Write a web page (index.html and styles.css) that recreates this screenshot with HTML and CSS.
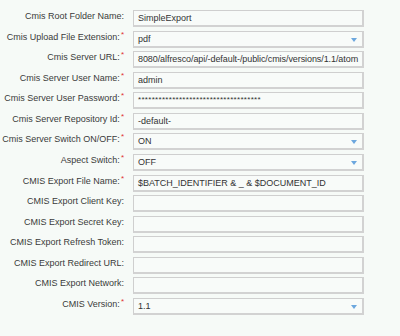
FILE: index.html
```html
<!DOCTYPE html>
<html>
<head>
<meta charset="utf-8">
<link rel="stylesheet" href="styles.css">
</head>
<body>
<div class="form">
  <div class="label">Cmis Root Folder Name:</div>
  <div class="field">SimpleExport</div>

  <div class="label">Cmis Upload File Extension:<span class="req">*</span></div>
  <div class="field select">pdf<span class="arrow"></span></div>

  <div class="label">Cmis Server URL:<span class="req">*</span></div>
  <div class="field url">8080/alfresco/api/-default-/public/cmis/versions/1.1/atom</div>

  <div class="label">Cmis Server User Name:<span class="req">*</span></div>
  <div class="field">admin</div>

  <div class="label">Cmis Server User Password:<span class="req">*</span></div>
  <div class="field pw">************************************</div>

  <div class="label">Cmis Server Repository Id:<span class="req">*</span></div>
  <div class="field">-default-</div>

  <div class="label">Cmis Server Switch ON/OFF:<span class="req">*</span></div>
  <div class="field select">ON<span class="arrow"></span></div>

  <div class="label">Aspect Switch:<span class="req">*</span></div>
  <div class="field select">OFF<span class="arrow"></span></div>

  <div class="label">CMIS Export File Name:<span class="req">*</span></div>
  <div class="field">$BATCH_IDENTIFIER &amp; _ &amp; $DOCUMENT_ID</div>

  <div class="label">CMIS Export Client Key:</div>
  <div class="field"></div>

  <div class="label">CMIS Export Secret Key:</div>
  <div class="field"></div>

  <div class="label">CMIS Export Refresh Token:</div>
  <div class="field"></div>

  <div class="label">CMIS Export Redirect URL:</div>
  <div class="field"></div>

  <div class="label">CMIS Export Network:</div>
  <div class="field"></div>

  <div class="label">CMIS Version:<span class="req">*</span></div>
  <div class="field select">1.1<span class="arrow"></span></div>
</div>
</body>
</html>
```

FILE: styles.css
```css
html, body {
  margin: 0;
  padding: 0;
  background: #f6faf7;
}
body {
  font-family: "Liberation Sans", Arial, sans-serif;
  font-size: 9px;
  color: #333;
}
.form {
  display: grid;
  grid-template-columns: 124px 231px;
  column-gap: 9px;
  grid-auto-rows: 17px;
  row-gap: 3.57px;
  padding-top: 10px;
}
.label {
  text-align: right;
  line-height: 12px;
  white-space: nowrap;
  color: #3a3a3a;
  align-self: start;
}
.req {
  color: #e03030;
  font-size: 8px;
  vertical-align: top;
  line-height: 8px;
  margin-left: 1px;
}
.field {
  position: relative;
  box-sizing: border-box;
  height: 17px;
  border: 1px solid #cfcfcf;
  border-right: 2px solid #d2d2d2;
  border-bottom: 2px solid #d2d2d2;
  background: #f8fbf9;
  padding-left: 4px;
  line-height: 14px;
  white-space: nowrap;
  overflow: hidden;
  color: #333;
}
.url {
  letter-spacing: -0.08px;
}
.pw {
  font-size: 8px;
  letter-spacing: 0.3px;
}
.arrow {
  position: absolute;
  right: 5px;
  top: 6px;
  width: 0;
  height: 0;
  border-left: 3px solid transparent;
  border-right: 3px solid transparent;
  border-top: 4px solid #6ca7de;
}
```
